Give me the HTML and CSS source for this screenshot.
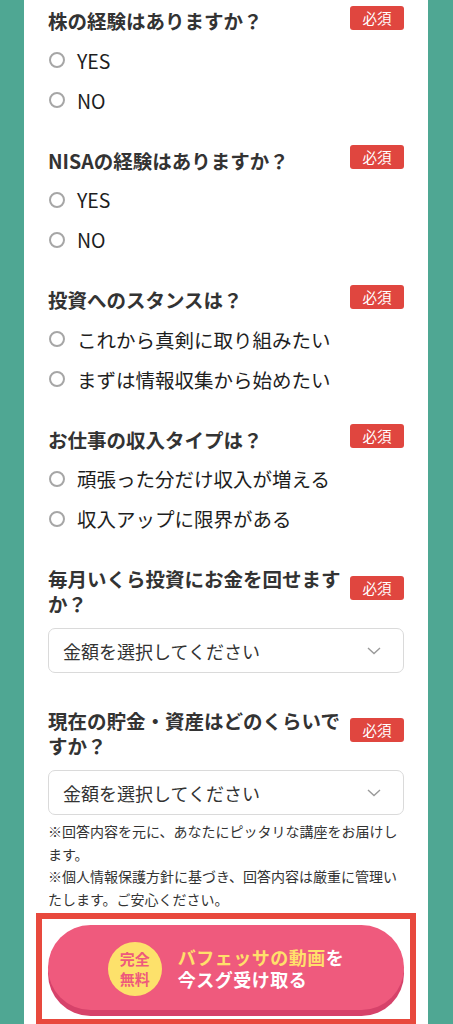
FILE: index.html
```html
<!DOCTYPE html>
<html lang="ja">
<head>
  <meta charset="UTF-8" />
  <title>無料動画の申し込み</title>
  <link rel="stylesheet" href="styles.css">
</head>
<body>
  <div class="form-card">

    <div class="question">
      <div class="q-head">
        <h3 class="q-title">株の経験はありますか？</h3>
        <span class="badge">必須</span>
      </div>
      <label class="option"><input type="radio" name="stock"><span>YES</span></label>
      <label class="option"><input type="radio" name="stock"><span>NO</span></label>
    </div>

    <div class="question">
      <div class="q-head">
        <h3 class="q-title">NISAの経験はありますか？</h3>
        <span class="badge">必須</span>
      </div>
      <label class="option"><input type="radio" name="nisa"><span>YES</span></label>
      <label class="option"><input type="radio" name="nisa"><span>NO</span></label>
    </div>

    <div class="question">
      <div class="q-head">
        <h3 class="q-title">投資へのスタンスは？</h3>
        <span class="badge">必須</span>
      </div>
      <label class="option"><input type="radio" name="stance"><span>これから真剣に取り組みたい</span></label>
      <label class="option"><input type="radio" name="stance"><span>まずは情報収集から始めたい</span></label>
    </div>

    <div class="question">
      <div class="q-head">
        <h3 class="q-title">お仕事の収入タイプは？</h3>
        <span class="badge">必須</span>
      </div>
      <label class="option"><input type="radio" name="income"><span>頑張った分だけ収入が増える</span></label>
      <label class="option"><input type="radio" name="income"><span>収入アップに限界がある</span></label>
    </div>

    <div class="question">
      <div class="q-head">
        <h3 class="q-title">毎月いくら投資にお金を回せますか？</h3>
        <span class="badge">必須</span>
      </div>
      <div class="select">
        <span>金額を選択してください</span>
        <svg width="14" height="8" viewBox="0 0 14 8"><path d="M1 1l6 5.5L13 1" fill="none" stroke="#9a9a9a" stroke-width="1.4"/></svg>
      </div>
    </div>

    <div class="question question-last">
      <div class="q-head">
        <h3 class="q-title">現在の貯金・資産はどのくらいですか？</h3>
        <span class="badge">必須</span>
      </div>
      <div class="select">
        <span>金額を選択してください</span>
        <svg width="14" height="8" viewBox="0 0 14 8"><path d="M1 1l6 5.5L13 1" fill="none" stroke="#9a9a9a" stroke-width="1.4"/></svg>
      </div>
    </div>

    <p class="note">※回答内容を元に、あなたにピッタリな講座をお届けします。</p>
    <p class="note">※個人情報保護方針に基づき、回答内容は厳重に管理いたします。ご安心ください。</p>

    <div class="cta-frame">
      <button class="cta">
        <span class="free-badge">完全<br>無料</span>
        <span class="cta-text"><span class="hl">バフェッサの動画</span>を<br>今スグ受け取る</span>
      </button>
    </div>

  </div>
</body>
</html>
```

FILE: styles.css
```css
body {
  margin: 0;
  background-color: #4fa793;
  font-family: "Noto Sans CJK JP", "Noto Sans", sans-serif;
  color: #333;
}

.form-card {
  margin: 0 25px 0 24px;
  background: #fff;
  padding: 8px 24px 0;
  min-height: 1024px;
  box-sizing: border-box;
}

.question {
  display: flex;
  flex-direction: column;
  margin-bottom: 27.5px;
}

.question-last {
  margin-bottom: 0;
}

.q-head {
  display: flex;
  align-items: center;
  justify-content: space-between;
  gap: 8px;
  margin-bottom: 7px;
}

.q-title {
  margin: 0;
  flex: 1;
  font-size: 19.5px;
  line-height: 25px;
  font-weight: bold;
  color: #333;
}

.badge {
  flex-shrink: 0;
  width: 54px;
  height: 24px;
  line-height: 24px;
  margin: -3px 0 3px;
  text-align: center;
  background: #e0463f;
  color: #fff;
  font-size: 14.5px;
  border-radius: 3px;
}

.option {
  display: flex;
  align-items: center;
  height: 40px;
  font-size: 19.5px;
  color: #1e1e1e;
}

.option input {
  appearance: none;
  margin: 0 12px 0 1px;
  width: 16px;
  height: 16px;
  border: 2px solid #a6a6a6;
  border-radius: 50%;
  box-sizing: border-box;
}

.select {
  display: flex;
  align-items: center;
  justify-content: space-between;
  height: 45px;
  margin: 5px 0 7.5px;
  padding: 0 22px 0 14px;
  border: 1.5px solid #dadada;
  border-radius: 7px;
  box-sizing: border-box;
  font-size: 18px;
  color: #333;
}

.question-last .select {
  margin-bottom: 5px;
}

.note {
  margin: 0;
  font-size: 14px;
  line-height: 22.5px;
  color: #333;
}

.cta-frame {
  margin: 3px -12px 0;
  border: 6px solid #e8493d;
  padding: 6px 6px 3px;
}

.cta {
  display: flex;
  align-items: center;
  justify-content: center;
  gap: 16px;
  width: 100%;
  height: 85px;
  margin-bottom: 6px;
  border: none;
  border-radius: 43px;
  background: #ef5a7d;
  box-shadow: 0 6px 0 #d6426a;
  font-family: inherit;
  cursor: pointer;
}

.free-badge {
  width: 54px;
  height: 54px;
  border-radius: 50%;
  background: #fde16b;
  color: #ee5a7c;
  font-size: 15px;
  font-weight: bold;
  line-height: 20px;
  display: flex;
  align-items: center;
  justify-content: center;
  text-align: center;
  margin-top: 2px;
}

.cta-text {
  color: #fff;
  font-size: 18px;
  font-weight: bold;
  line-height: 22px;
  letter-spacing: 0.5px;
  text-align: left;
}

.cta-text .hl {
  color: #ffe06b;
}
```
